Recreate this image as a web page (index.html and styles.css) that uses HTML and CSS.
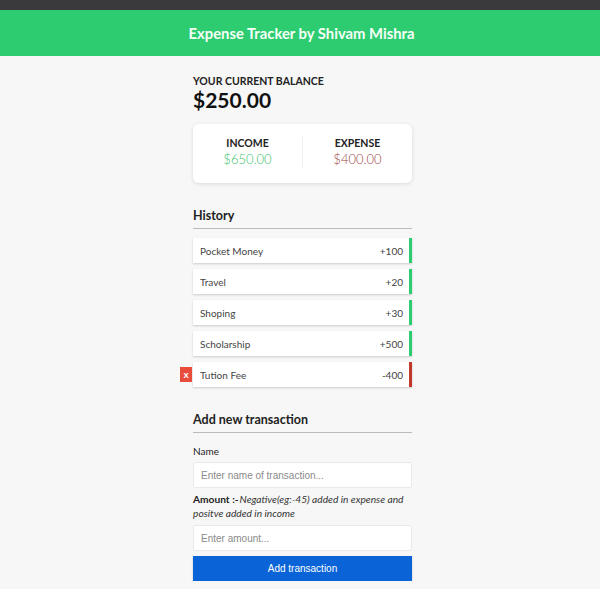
FILE: index.html
```html
<!DOCTYPE html>
<html>
<head>
<meta charset="utf-8">
<link rel="stylesheet" href="styles.css">
</head>
<body>
<div class="topbar"></div>
<header class="header"><h1>Expense Tracker by Shivam Mishra</h1></header>
<main class="container">
  <h4 class="bal-label">Your Current Balance</h4>
  <div class="balance">$250.00</div>
  <div class="inc-exp">
    <div class="col">
      <div class="col-title">INCOME</div>
      <div class="money plus">$650.00</div>
    </div>
    <div class="col">
      <div class="col-title">EXPENSE</div>
      <div class="money minus">$400.00</div>
    </div>
  </div>
  <h3 class="section">History</h3>
  <ul class="list">
    <li class="item plus"><span>Pocket Money</span><span>+100</span></li>
    <li class="item plus"><span>Travel</span><span>+20</span></li>
    <li class="item plus"><span>Shoping</span><span>+30</span></li>
    <li class="item plus"><span>Scholarship</span><span>+500</span></li>
    <li class="item minus"><button class="del">x</button><span>Tution Fee</span><span>-400</span></li>
  </ul>
  <h3 class="section">Add new transaction</h3>
  <form class="form">
    <label class="lbl">Name</label>
    <input class="field" type="text" placeholder="Enter name of transaction...">
    <label class="lbl amount"><b>Amount :-</b><i>Negative(eg:-45) added in expense and</i> <i>positve added in income</i></label>
    <input class="field" type="text" placeholder="Enter amount...">
    <button class="btn" type="button">Add transaction</button>
  </form>
</main>
</body>
</html>
```
FILE: styles.css
```css
* { box-sizing: border-box; }
body {
  margin: 0;
  background: #f7f7f7;
  font-family: Lato, "Open Sans", sans-serif;
  color: #222;
}
.topbar { height: 10px; background: #3a3a3c; }
.header {
  height: 46px;
  background: #2ecc71;
  display: flex;
  align-items: center;
  justify-content: center;
}
.header h1 {
  margin: 0;
  font-size: 14.8px;
  font-weight: 700;
  color: #f4fff7;
  padding-left: 3px;
}
.container {
  width: 219px;
  margin-left: calc(50% - 107px);
  padding-top: 19px;
}
.bal-label {
  margin: 0;
  font-size: 10.5px;
  font-weight: 700;
  text-transform: uppercase;
  line-height: 13px;
}
.balance {
  font-size: 21px;
  font-weight: 700;
  line-height: 24px;
  color: #111;
}
.inc-exp {
  margin-top: 12px;
  height: 59px;
  padding-bottom: 4px;
  background: #fff;
  border-radius: 6px;
  box-shadow: 0 1px 4px rgba(0,0,0,0.12);
  display: flex;
  align-items: center;
}
.col {
  flex: 1;
  text-align: center;
}
.col:first-child { border-right: 1px solid #eee; }
.col-title {
  font-size: 10.5px;
  font-weight: 700;
  line-height: 14px;
  color: #222;
}
.money {
  font-size: 13px;
  font-weight: 300;
  line-height: 17px;
  margin-top: 1px;
}
.money.plus { color: #3cbf6c; }
.money.minus { color: #a04444; }
.section {
  margin: 25px 0 0;
  padding-bottom: 4px;
  border-bottom: 1px solid #bbb;
  font-size: 12.5px;
  font-weight: 700;
  line-height: 16px;
  color: #222;
}
.list {
  list-style: none;
  margin: 9px 0 0;
  padding: 0;
  display: flex;
  flex-direction: column;
  gap: 6px;
}
.item {
  position: relative;
  height: 25px;
  background: #fff;
  box-shadow: 0 1px 2px rgba(0,0,0,0.18);
  display: flex;
  align-items: center;
  justify-content: space-between;
  padding: 0 6px 0 7px;
  font-size: 10px;
  font-weight: 400;
  color: #444;
  border-right: 3px solid #2ecc71;
}
.item.minus { border-right-color: #c0392b; }
.del {
  position: absolute;
  left: -13px;
  top: 5px;
  width: 12px;
  height: 15px;
  padding: 0;
  border: 0;
  background: #e74c3c;
  color: #fff;
  font-family: Lato, sans-serif;
  font-size: 10px;
  font-weight: 700;
  line-height: 15px;
}
.form {
  display: flex;
  flex-direction: column;
}
.lbl {
  font-size: 10px;
  line-height: 14px;
  color: #222;
  margin-top: 11px;
  margin-bottom: 4px;
}
.lbl.amount {
  font-size: 10.2px;
  margin-top: 4px;
  margin-bottom: 5px;
}
.lbl b { margin-right: 1px; }
.lbl i { color: #333; }
.field {
  height: 26px;
  border: 1px solid #eaeaea;
  border-radius: 2px;
  background: #fff;
  padding: 0 7px;
  font-family: "Liberation Sans", Arial, sans-serif;
  font-size: 10px;
}
.field::placeholder { color: #8a8a8a; }
.btn {
  margin-top: 5px;
  height: 25px;
  border: 0;
  background: #0a64d8;
  color: #fff;
  font-family: "Liberation Sans", Arial, sans-serif;
  font-size: 10px;
  box-shadow: 0 1px 2px rgba(0,0,0,0.2);
}
```
